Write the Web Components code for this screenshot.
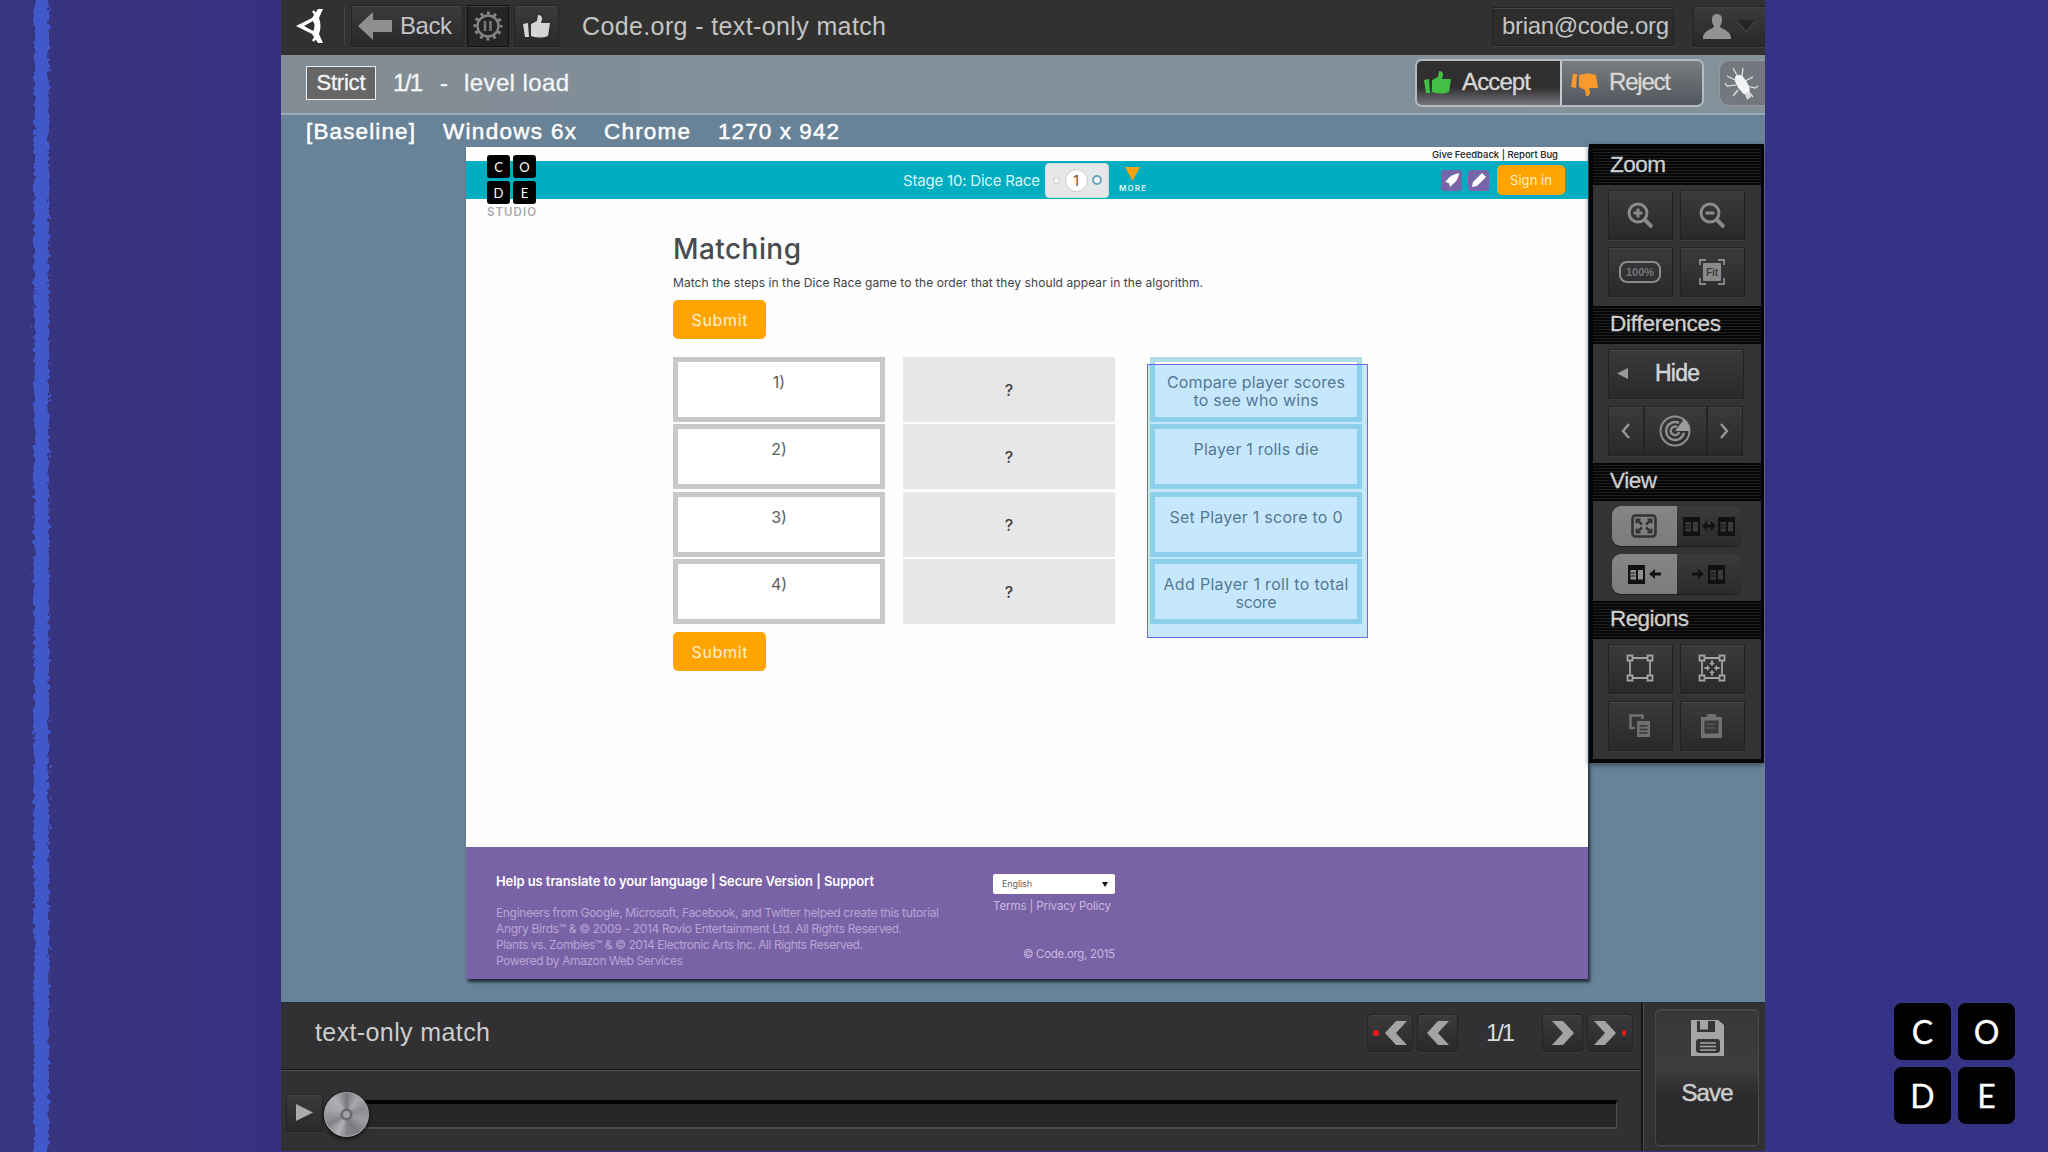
<!DOCTYPE html>
<html lang="en">
<head>
<meta charset="utf-8">
<title>Code.org - text-only match</title>
<style>
  body {
    margin: 0;
    width: 2048px;
    height: 1152px;
    overflow: hidden;
    background: #353285;
    font-family: "Liberation Sans", Arial, sans-serif;
  }
</style>
</head>
<body>
<video-frame></video-frame>
<script>
const ICONS = {
  eye: ['0 0 28 36', '<path d="M22 1 16 10 0 18l16 8 6 9h5l-4-9q3-8 0-16l4-9zM17 13q3 5 0 10L8 18z" fill="#fff" fill-rule="evenodd"/><path d="m17 3 5 7M17 33l5-7" stroke="#fff" stroke-width="2.5"/>'],
  back: ['0 0 34 28', '<path d="M0 14 15 0v8h19v12H15v8z" fill="#8f8f8f"/>'],
  gear: ['0 0 30 30', '<circle cx="15" cy="15" r="10.5" fill="none" stroke="#858585" stroke-width="2.4"/><circle cx="15" cy="15" r="13" fill="none" stroke="#858585" stroke-width="3" stroke-dasharray="3 3.807" stroke-dashoffset="1.5"/><path d="M12 10v10M17.500 10v10" stroke="#777" stroke-width="2.600"/>'],
  thumb: ['0 0 27 23', '<path d="m0 9 5-1 1 14H2zM8 9l6-3 1-6q4 0 4 4l-1 4h9l-2 13q-8 3-17 0z" fill="currentColor"/>'],
  user: ['0 0 28 25', '<path d="M14 0c4 0 5.500 3 5 6.500 0 3-1.500 4-2 6 1 3 11 3 11 12.500H0c0-9.500 10-9.500 11-12.500-.500-2-2-3-2-6C8.500 3 10 0 14 0z" fill="#929292"/>'],
  caret: ['0 0 18 12', '<path d="M0 0h18l-9 12z" fill="#242625"/><path d="m0 1 9 11 9-11" fill="none" stroke="#4c4e4c"/>'],
  bug: ['0 0 40 40', '<g stroke="#e4e6e8" stroke-width="1.200" fill="none"><path d="m17 14-5-9M21 14l1-9M14 17l-8-4M15 22l-9 1-2-3M17 27l-5 6M24 18l8-4M26 23l8 2 3-2M27 28l5 6"/></g><path d="M14 14q5-5 9 1 8 10 5 16-5 2-8-3-7-7-6-14z" fill="#f2f3f4"/><path d="m24 31 2 6 4-3-2-6z" fill="#d8dadc"/>'],
  zoomIn: ['0 0 26 26', '<circle cx="11" cy="11" r="9" fill="none" stroke="#8b8b8d" stroke-width="3"/><path d="M6.500 11h9M11 6.500v9" stroke="#8b8b8d" stroke-width="3"/><path d="m17 17 8 8" stroke="#8b8b8d" stroke-width="4"/>'],
  zoomOut: ['0 0 26 26', '<circle cx="11" cy="11" r="9" fill="none" stroke="#8b8b8d" stroke-width="3"/><path d="M6.500 11h9" stroke="#8b8b8d" stroke-width="3"/><path d="m17 17 8 8" stroke="#8b8b8d" stroke-width="4"/>'],
  full: ['0 0 42 22', '<rect x="1" y="1" width="40" height="20" rx="7" fill="none" stroke="#8b8b8d" stroke-width="2"/><text x="21" y="14.500" text-anchor="middle" font-family="Liberation Sans" font-weight="bold" font-size="11" fill="#77777a" textLength="28">100%</text>'],
  fit: ['0 0 26 26', '<path d="M1 6V1h6M19 1h6v5M25 19v6h-6M7 25H1v-6" fill="none" stroke="#8b8b8d" stroke-width="1.800"/><rect x="4" y="4" width="18" height="18" rx="1" fill="#8b8b8d"/><text x="13" y="17" text-anchor="middle" font-family="Liberation Sans" font-weight="bold" font-size="10" fill="#3c3c3e">Fit</text>'],
  left: ['0 0 9 16', '<path d="M8 1 2 8l6 7" fill="none" stroke="#98989a" stroke-width="2.400"/>'],
  right: ['0 0 9 16', '<path d="m1 1 6 7-6 7" fill="none" stroke="#98989a" stroke-width="2.400"/>'],
  tri: ['0 0 11 11', '<path d="M0 5.500 11 0v11z" fill="#98989a"/>'],
  radar: ['0 0 32 32', '<g fill="none" stroke="#8f8f91"><circle cx="16" cy="16" r="14.500" stroke-width="2"/><path d="M20 7.900a9 9 0 1 0 4.900 9.800" stroke-width="2.400"/><path d="M18 12a4.300 4.300 0 1 0 2.200 5" stroke-width="2.400"/></g><path d="m16 16 9-12q5 5 5.500 12z" fill="#9b9b9d"/>'],
  collapse: ['0 0 26 24', '<rect x="1.500" y="1.500" width="23" height="21" rx="3" fill="none" stroke="#333" stroke-width="2.600"/><path d="m6 6 5 4.500M20 6l-5 4.500M6 18l5-4.500M20 18l-5-4.500" stroke="#333" stroke-width="2.400"/><path d="M5.500 9.500v-4h4M16.500 5.500h4v4M20.500 14.500v4h-4M9.500 18.500h-4v-4" fill="none" stroke="#333" stroke-width="2"/>'],
  film: ['0 0 17 19', '<path d="M0 0h17v19H0z" fill="#111"/><path d="M2.500 5H8v9.500H2.500zM10 5h5v9.500h-5z" fill="currentColor"/><path d="M3 8h4.500M3 11h4.500" stroke="#111"/>'],
  both: ['0 0 14 12', '<path d="M0 6l5-5v3.500h4V1l5 5-5 5V7.500H5V11z" fill="#111"/>'],
  toLeft: ['0 0 12 10', '<path d="m0 5 6-5v3.500h6v3H6V10z" fill="#111"/>'],
  toRight: ['0 0 12 10', '<path d="M12 5 6 0v3.500H0v3h6V10z" fill="#111"/>'],
  region: ['0 0 28 28', '<g fill="none" stroke="#a2a2a4" stroke-width="1.800"><path d="M7 4h14M7 24h14M4 7v14M24 7v14"/><path d="M1.500 1.500h5v5h-5zM21.500 1.500h5v5h-5zM1.500 21.500h5v5h-5zM21.500 21.500h5v5h-5z"/></g>'],
  regionAll: ['0 0 28 28', '<g fill="none" stroke="#a2a2a4" stroke-width="1.800"><path d="M7 4h14M7 24h14M4 7v14M24 7v14"/><path d="M1.500 1.500h5v5h-5zM21.500 1.500h5v5h-5zM1.500 21.500h5v5h-5zM21.500 21.500h5v5h-5z"/></g><path d="M14 12l-3-3h2V6.500h2V9h2zM14 16l-3 3h2v2.500h2V19h2zM12 14l-3-3v2H6.500v2H9v2zM16 14l3-3v2h2.500v2H19v2z" fill="#a2a2a4"/>'],
  copy: ['0 0 22 24', '<path d="M6 14H1.500V1.500h12V5" fill="none" stroke="#707072" stroke-width="2.400"/><path d="M8 7h13v16H8z" fill="#707072"/><path d="M10.500 12h8M10.500 15.500h8M10.500 19h8" stroke="#333" stroke-width="1.500"/>'],
  paste: ['0 0 21 24', '<path d="M0 3h5l2-3h7l2 3h5v21H0z" fill="#707072"/><path d="M3.500 6.500h14v13h-14z" fill="#39393b"/><path d="M5.500 10h9M5.500 14h9" stroke="#59595b" stroke-width="1.300"/>'],
  prev: ['0 0 22 24', '<path d="M11 0h11L11 12l11 12H11L0 12z" fill="#a3a3a3"/>'],
  next: ['0 0 22 24', '<path d="M0 0h11l11 12-11 12H0l11-12z" fill="#a3a3a3"/>'],
  play: ['0 0 17 17', '<path d="M0 0v17l17-8.500z" fill="#ababad"/>'],
  disk: ['0 0 33 36', '<path d="M0 0h27l6 5v31H0z" fill="#a5a5a5"/><path d="M6 1h18v11H6z" fill="#353537"/><path d="M9 1h8v8.500H9z" fill="#a5a5a5"/><rect x="5" y="19" width="24" height="14" rx="3" fill="#353537"/><path d="M9 23h16M9 26.500h16M9 30h16" stroke="#a5a5a5" stroke-width="1.600"/>'],
  rocket: ['0 0 16 16', '<path d="M15 1Q6 3 4 7L1 10l4 1 1 4 3-3q5-3 6-11z" fill="#fff"/>'],
  pencil: ['0 0 16 16', '<path d="m1 15 1-5 9-9 4 4-9 9z" fill="#fff"/>']
};

const define = (name, markup) => customElements.define(name, class extends HTMLElement {
  constructor() {
    super();
    this.attachShadow({ mode: "open" }).innerHTML = markup;
  }
});

class UiIcon extends HTMLElement {
  connectedCallback() {
    const [box, body] = ICONS[this.getAttribute("name")];
    const [, , w, h] = box.split(" ");
    this.attachShadow({ mode: "open" }).innerHTML = `
      <style>:host { display: block; flex: none; width: ${w}px; height: ${h}px; } svg { display: block; width: 100%; height: 100%; }</style>
      <svg viewBox="${box}">${body}</svg>`;
  }
}
customElements.define("ui-icon", UiIcon);

// one line of text spread over a given width
class FitText extends HTMLElement {
  connectedCallback() {
    const width = Number(this.getAttribute("w"));
    this.attachShadow({ mode: "open" }).innerHTML = `
      <style>:host { display: block; flex: none; white-space: nowrap; text-align: left; width: ${width}px; } span { display: inline-block; vertical-align: top; }</style>
      <span><slot></slot></span>`;
    const span = this.shadowRoot.querySelector("span");
    const natural = span.getBoundingClientRect().width;
    span.style.letterSpacing = (width - natural) / (this.textContent.length - 1) + "px";
  }
}

define("dark-button", `
  <style>
    :host {
      display: flex; align-items: center; justify-content: center; flex: none;
      box-sizing: border-box; border: 1px solid #222324;
      background: linear-gradient(#3b3b3d, #29292b);
      box-shadow: inset 0 1px #444446, 0 1px #3d3d3f;
    }
  </style>
  <slot></slot>`);

define("top-bar", `
  <style>
    :host { display: flex; height: 55px; box-sizing: border-box; padding: 0 0 3px 15px; align-items: center; background: #313230; color: #c4c4c4; font-size: 24px; overflow: hidden; }
    .sep { width: 1px; height: 38px; margin: 0 6px 0 20px; background: #444543; }
    .back { width: 112px; height: 42px; gap: 8px; padding-right: 4px; }
    .gear { width: 42px; height: 42px; margin-left: 4px; background: #242524; border-color: #111; }
    .like { width: 45px; height: 42px; margin-left: 5px; color: #d5d5d5; }
    .title { margin-left: 23px; font-size: 25px; }
    .mail { width: 182px; height: 39px; margin-left: auto; padding-left: 5px; background: #2c2d2c; }
    .user { width: 90px; height: 41px; margin: 0 -18px 0 19px; justify-content: flex-start; padding-left: 9px; gap: 6px; }
  </style>
  <ui-icon name="eye"></ui-icon>
  <div class="sep"></div>
  <dark-button class="back"><ui-icon name="back"></ui-icon><fit-text w="52">Back</fit-text></dark-button>
  <dark-button class="gear"><ui-icon name="gear"></ui-icon></dark-button>
  <dark-button class="like"><ui-icon name="thumb"></ui-icon></dark-button>
  <fit-text class="title" w="304">Code.org - text-only match</fit-text>
  <dark-button class="mail"><fit-text w="167">brian@code.org</fit-text></dark-button>
  <dark-button class="user"><ui-icon name="user"></ui-icon><ui-icon name="caret"></ui-icon></dark-button>`);

define("step-bar", `
  <style>
    :host { display: flex; height: 60px; box-sizing: border-box; padding: 0 0 3px 25px; align-items: center; background: linear-gradient(90deg, #828d96, #83919b); border-bottom: 2px solid #96a9b7; color: #f4f6f8; font-size: 24px; overflow: hidden; -webkit-text-stroke: .3px; }
    .strict { box-sizing: border-box; width: 70px; height: 34px; border: 1.500px solid #eee; background: #666; display: flex; justify-content: center; align-items: center; font-size: 22px; margin-right: 17px; }
    .dash { margin: 0 16px 0 17px; }
    .verdict { display: flex; box-sizing: border-box; width: 289px; height: 48px; margin-left: auto; border: 2px solid #b4bbc1; border-radius: 7px; overflow: hidden; color: #d8d8d8; }
    .verdict div { display: flex; box-sizing: border-box; align-items: center; padding-bottom: 1px; }
    .accept { width: 145px; background: linear-gradient(#302e2e 60%, #75757b); padding-left: 7px; gap: 11px; border-right: 2px solid #c6cace; }
    .accept ui-icon { color: #42c046; }
    .reject { flex: 1; background: linear-gradient(#7b7d7e, #50575f); padding-left: 9px; gap: 11px; }
    .reject ui-icon { color: #fb9a2c; transform: scaleY(-1) translateY(-2px); }
    .bug { flex: none; width: 46px; height: 46px; margin: 0 0 0 15px; border-radius: 10px 0 0 10px; border: 1px solid #96999e; border-right: 0; background: #74777d; box-sizing: border-box; padding: 2px 0 0 1px; overflow: hidden; }
  </style>
  <div class="strict"><fit-text w="49">Strict</fit-text></div>
  <fit-text w="30">1/1</fit-text><span class="dash">-</span><fit-text w="105">level load</fit-text>
  <div class="verdict">
    <div class="accept"><ui-icon name="thumb"></ui-icon><fit-text w="69">Accept</fit-text></div>
    <div class="reject"><ui-icon name="thumb"></ui-icon><fit-text w="62">Reject</fit-text></div>
  </div>
  <div class="bug"><ui-icon name="bug"></ui-icon></div>`);

define("code-logo", `
  <style>
    :host { display: grid; grid-template-columns: auto auto; width: max-content; gap: var(--gap, 7px); font: 400 var(--letter, 32px) Lato, sans-serif; color: #fff; }
    div { display: flex; align-items: center; justify-content: center; width: var(--cell, 57px); height: var(--cell, 57px); border-radius: var(--round, 8px); background: #000; -webkit-text-stroke: var(--stroke, .3px) #fff; }
  </style>
  <div>C</div><div>O</div><div>D</div><div>E</div>`);

define("orange-button", `
  <style>
    :host { display: flex; align-items: center; justify-content: center; width: 93px; height: 39px; border-radius: 5px; background: #ffa400; color: #fff0ce; font-size: 16px; }
  </style>
  <slot></slot>`);

define("match-card", `
  <style>
    :host { display: block; box-sizing: border-box; height: 65px; border: 5px solid #c8c8c9; padding: 11px 0 0; background: #fff; font-size: 16px; line-height: 18px; color: #5b5d61; text-align: center; }
    :host([kind=slot]) { border: 0; padding: 24px 0 0; background: #e7e7e8; color: #444; font-weight: 500; }
    :host([kind=answer]) { border-color: #addce4; }
    ::slotted(*) { margin: 0 auto; }
  </style>
  <slot></slot>`);

define("studio-header", `
  <style>
    :host { display: block; position: relative; }
    .links { height: 13px; padding-top: 1px; display: flex; align-items: center; justify-content: flex-end; padding-right: 30px; font-size: 9.500px; color: #222; font-weight: 500; }
    .bar { height: 38px; display: flex; align-items: center; background: #00adc1; padding-left: 437px; color: #d9f6f8; font-size: 15px; }
    .stage { display: flex; align-items: center; justify-content: space-between; box-sizing: border-box; width: 64px; height: 35px; margin-left: 5px; padding: 0 6px 0 7px; border-radius: 4px; background: #e5e7e9; border: 1px solid #cfdcde; }
    .stage i { width: 5px; height: 5px; border-radius: 50%; border: 1.500px solid #c9c9cb; background: #f6f6f6; }
    .stage b { width: 21px; height: 21px; line-height: 21px; border-radius: 50%; background: #fff; border: 1px solid #c8c8c8; text-align: center; color: #555; font-weight: 400; font-size: 14px; }
    .stage i:last-child { width: 6px; height: 6px; border: 2px solid #68a4bd; }
    .more { display: grid; justify-items: center; gap: 4px; margin: 0 0 2px 10px; font-size: 8px; line-height: 7px; font-weight: 600; }
    .more svg { display: block; }
    .tool { display: flex; align-items: center; justify-content: center; width: 21px; height: 21px; border-radius: 3px; background: #7665a8; margin-right: 6px; }
    .gap { margin-left: auto; }
    orange-button { width: 68px; height: 30px; margin: 0 23px 0 2px; font-size: 13px; }
    .logo { position: absolute; left: 21px; top: 8px; --cell: 23px; --gap: 3px; --round: 3px; --letter: 13px; --stroke: 0; }
    .logo code-logo { margin-bottom: 3px; }
    .logo fit-text { font-size: 11.500px; line-height: 11px; font-weight: 600; color: #a9a9ab; }
  </style>
  <div class="links"><fit-text w="126">Give Feedback | Report Bug</fit-text></div>
  <div class="bar">
    <fit-text w="137">Stage 10: Dice Race</fit-text>
    <div class="stage"><i></i><b>1</b><i></i></div>
    <div class="more"><svg width="15" height="14"><path d="M0 0h15L7.500 14z" fill="#f5a60c"/></svg><fit-text w="27">MORE</fit-text></div>
    <span class="gap"></span>
    <span class="tool"><ui-icon name="rocket"></ui-icon></span>
    <span class="tool"><ui-icon name="pencil"></ui-icon></span>
    <orange-button><fit-text w="42">Sign in</fit-text></orange-button>
  </div>
  <div class="logo"><code-logo></code-logo><fit-text w="49">STUDIO</fit-text></div>`);

define("matching-level", `
  <style>
    :host { display: block; position: relative; height: 648px; box-sizing: border-box; padding: 30px 0 0 207px; }
    h1 { margin: 0; font-size: 28px; line-height: 40px; font-weight: 500; color: #4a4b4f; }
    .hint { margin: 4px 0 7px; font-size: 12px; line-height: 20px; color: #414246; }
    .board { display: grid; grid-template-columns: 212px 212px 212px; column-gap: 18px; row-gap: 2.400px; margin: 18px 0 8px; }
    match-card[kind=answer] { margin: 0 -17px 0 17px; }
    /* difference region laid over the answers */
    .diff { position: absolute; left: 681px; top: 165px; width: 221px; height: 274px; box-sizing: border-box; border: 1.500px solid #6c68ee; background: rgba(70, 182, 255, .31); }
  </style>
  <h1><fit-text w="128">Matching</fit-text></h1>
  <fit-text class="hint" w="530">Match the steps in the Dice Race game to the order that they should appear in the algorithm.</fit-text>
  <orange-button><fit-text w="56">Submit</fit-text></orange-button>
  <div class="board">
    <match-card>1)</match-card><match-card kind="slot">?</match-card>
    <match-card kind="answer"><fit-text w="178">Compare player scores</fit-text><fit-text w="125">to see who wins</fit-text></match-card>
    <match-card>2)</match-card><match-card kind="slot">?</match-card>
    <match-card kind="answer"><fit-text w="125">Player 1 rolls die</fit-text></match-card>
    <match-card>3)</match-card><match-card kind="slot">?</match-card>
    <match-card kind="answer"><fit-text w="173">Set Player 1 score to 0</fit-text></match-card>
    <match-card>4)</match-card><match-card kind="slot">?</match-card>
    <match-card kind="answer"><fit-text w="185">Add Player 1 roll to total</fit-text><fit-text w="41">score</fit-text></match-card>
  </div>
  <orange-button><fit-text w="56">Submit</fit-text></orange-button>
  <div class="diff"></div>`);

define("studio-footer", `
  <style>
    :host { display: flex; height: 132px; box-sizing: border-box; padding: 26px 0 0 30px; background: #7962a6; color: #baa5d4; font-size: 12px; line-height: 16px; }
    .links { display: flex; font-size: 13px; font-weight: 600; color: #fff; margin-bottom: 16px; }
    .left { width: 497px; }
    .right { width: 122px; font-size: 11.500px; color: #c9b8de; }
    .select { display: flex; align-items: center; justify-content: space-between; box-sizing: border-box; height: 20px; margin: 1px 0 4px; padding: 0 7px 0 9px; border-radius: 2px; background: #fff; color: #666; font-size: 9px; }
    .select i { border: 3px solid transparent; border-top: 5px solid #111; border-bottom: 0; }
    .copy { margin: 32px 0 0 auto; }
  </style>
  <div class="left">
    <div class="links"><fit-text w="378">Help us translate to your language | Secure Version | Support</fit-text></div>
    <fit-text w="443">Engineers from Google, Microsoft, Facebook, and Twitter helped create this tutorial</fit-text>
    <fit-text w="406">Angry Birds™ &amp; © 2009 - 2014 Rovio Entertainment Ltd. All Rights Reserved.</fit-text>
    <fit-text w="367">Plants vs. Zombies™ &amp; © 2014 Electronic Arts Inc. All Rights Reserved.</fit-text>
    <fit-text w="187">Powered by Amazon Web Services</fit-text>
  </div>
  <div class="right">
    <div class="select"><fit-text w="30">English</fit-text><i></i></div>
    <fit-text w="118">Terms | Privacy Policy</fit-text>
    <fit-text class="copy" w="92">© Code.org, 2015</fit-text>
  </div>`);

define("screen-capture", `
  <style>
    :host { display: block; width: 1122px; height: 832px; background: #fefefe; font-family: Inter, sans-serif; box-shadow: 2px 3px 3px #1c2a35; }
  </style>
  <studio-header></studio-header>
  <matching-level></matching-level>
  <studio-footer></studio-footer>`);

define("panel-section", `
  <style>
    :host { display: block; }
    header { height: 38px; box-sizing: border-box; padding: 2px 0 0 17px; line-height: 32px; font-size: 22.500px; color: #cfcfcf; background: repeating-linear-gradient(#060607 0 2px, #1e1f20 2px 3px); -webkit-text-stroke: .3px #cfcfcf; }
    .body { display: grid; gap: 7px; padding: 5px 15px 9px; }
  </style>
  <header><slot name="title"></slot></header>
  <div class="body"><slot></slot></div>`);

define("view-toggle", `
  <style>
    :host { display: flex; width: 129px; height: 40px; margin-left: 4px; border-radius: 9px; overflow: hidden; background: linear-gradient(#3b3b3d, #2a2a2c); box-shadow: 0 1px 1px #1f1f20; }
    div { display: flex; align-items: center; justify-content: center; gap: 4px; flex: 1; color: #3a3a3c; }
    div:first-of-type { background: linear-gradient(#858587, #7c7c7e); color: #909092; }
  </style>
  <div><slot name="on"></slot></div><div><slot name="off"></slot></div>`);

define("tool-panel", `
  <style>
    :host { display: block; box-sizing: border-box; width: 175px; height: 619px; border: 4px solid #050506; border-top-width: 3px; border-right-width: 3px; background: #333335; box-shadow: 0 2px 5px #3a4c5a; }
    .row { display: flex; gap: 7px; }
    .row dark-button { width: 65px; height: 50px; padding: 0 2px 1px 0; }
    .regions dark-button { padding-bottom: 3px; }
    .hide dark-button { width: 136px; justify-content: flex-start; padding-left: 8px; gap: 27px; color: #d2d2d2; font-size: 23px; -webkit-text-stroke: .5px #d2d2d2; }
    .step { gap: 0; }
    .step dark-button { width: 36px; }
    .step .mid { width: 63px; }
    .view { gap: 8px; display: grid; margin-bottom: -1px; }
    .film { gap: 2px; display: flex; align-items: center; }
  </style>
  <panel-section>
    <fit-text slot="title" w="56">Zoom</fit-text>
    <div class="row"><dark-button><ui-icon name="zoomIn"></ui-icon></dark-button><dark-button><ui-icon name="zoomOut"></ui-icon></dark-button></div>
    <div class="row"><dark-button><ui-icon name="full"></ui-icon></dark-button><dark-button><ui-icon name="fit"></ui-icon></dark-button></div>
  </panel-section>
  <panel-section>
    <fit-text slot="title" w="111">Differences</fit-text>
    <div class="row hide"><dark-button><ui-icon name="tri"></ui-icon><fit-text w="45">Hide</fit-text></dark-button></div>
    <div class="row step"><dark-button><ui-icon name="left"></ui-icon></dark-button><dark-button class="mid"><ui-icon name="radar"></ui-icon></dark-button><dark-button><ui-icon name="right"></ui-icon></dark-button></div>
  </panel-section>
  <panel-section style="margin-top: -2px">
    <fit-text slot="title" w="47">View</fit-text>
    <div class="view">
      <view-toggle>
        <ui-icon slot="on" name="collapse"></ui-icon>
        <span slot="off" class="film"><ui-icon name="film"></ui-icon><ui-icon name="both"></ui-icon><ui-icon name="film"></ui-icon></span>
      </view-toggle>
      <view-toggle>
        <ui-icon slot="on" name="film"></ui-icon><ui-icon slot="on" name="toLeft"></ui-icon>
        <ui-icon slot="off" name="toRight"></ui-icon><ui-icon slot="off" name="film"></ui-icon>
      </view-toggle>
    </div>
  </panel-section>
  <panel-section style="margin-top: -1px">
    <fit-text slot="title" w="79">Regions</fit-text>
    <div class="row regions"><dark-button><ui-icon name="region"></ui-icon></dark-button><dark-button><ui-icon name="regionAll"></ui-icon></dark-button></div>
    <div class="row"><dark-button><ui-icon name="copy"></ui-icon></dark-button><dark-button><ui-icon name="paste"></ui-icon></dark-button></div>
  </panel-section>`);

define("compare-area", `
  <style>
    :host { display: grid; grid-template-rows: 32px 1fr; height: 887px; background: #688297; overflow: hidden; }
    .env { display: flex; align-items: center; padding: 1px 0 0 25px; font-size: 22.500px; color: #fff; -webkit-text-stroke: .5px #fff; }
    .env fit-text { margin-right: 28px; }
    .main { display: flex; padding-left: 185px; }
    tool-panel { margin: -3px 0 0 1px; }
  </style>
  <div class="env"><fit-text w="109">[Baseline]</fit-text><fit-text w="133">Windows 6x</fit-text><fit-text w="86">Chrome</fit-text><fit-text w="121">1270 x 942</fit-text></div>
  <div class="main"><screen-capture></screen-capture><tool-panel></tool-panel></div>`);

define("play-bar", `
  <style>
    :host { display: flex; height: 149px; box-sizing: border-box; border-top: 1px solid #262b33; background: #313032; color: #cdcdcb; font-size: 24px; }
    .left { width: 1360px; border-right: 2px solid #141415; box-shadow: 1px 0 #4c4c4e; }
    .name { display: flex; align-items: center; height: 67px; box-sizing: border-box; padding: 0 8px 7px 34px; border-bottom: 1px solid #151516; box-shadow: 0 1px #505052; }
    .title { font-size: 25px; }
    .name dark-button { height: 38px; width: 41px; border-radius: 4px; margin-left: 4px; }
    .name .wide { width: 46px; gap: 6px; }
    .name .first { margin-left: auto; }
    .count { margin: 0 27px 0 28px; color: #dcdcdc; }
    .dot { width: 6px; height: 6px; border-radius: 50%; background: #f01616; }
    .seek { display: flex; align-items: center; height: 83px; padding: 4px 0 0 5px; box-sizing: border-box; }
    .seek dark-button { width: 37px; height: 38px; margin-top: -2px; }
    .track { display: flex; align-items: center; box-sizing: border-box; width: 1293px; height: 29px; margin: 1px 0 0 1px; background: linear-gradient(90deg, #313032 23px, #272528 23px); }
    .rail { flex: 1; height: 29px; box-sizing: border-box; border-top: 4px solid #020203; border-bottom: 2px solid #4b4b4d; border-right: 1px solid #4b4b4d; margin-left: -22px; }
    .knob { position: relative; width: 45px; height: 45px; flex: none; border-radius: 50%; box-sizing: border-box; border: 1.500px solid #aaa9ad; background: radial-gradient(circle, #a1a0a4 0 3px, #69686c 4px 5px, transparent 7px), conic-gradient(#77767a, #aaa9ad 35deg, #8c8b90 70deg, #9d9ca1 110deg, #7b7a7f 150deg, #858489 180deg, #b5b4b8 205deg, #838287 240deg, #a3a2a7 285deg, #b0afb3 325deg, #77767a); box-shadow: 0 2px 4px #111; }
    .save { display: flex; flex-direction: column; justify-content: flex-start; width: 104px; height: 137px; margin: 6px 0 0 12px; border: 1.500px solid #49494b; border-radius: 5px; padding-top: 10px; background: linear-gradient(#38383a, #3d3b3e 45%, #2b2a2c 65%, #2b2a2c); }
    .save fit-text { margin: 23px 0 0 1px; font-size: 24px; -webkit-text-stroke: .5px #cdcdcb; }
  </style>
  <div class="left">
    <div class="name">
      <fit-text class="title" w="175">text-only match</fit-text>
      <dark-button class="first wide"><span class="dot"></span><ui-icon name="prev"></ui-icon></dark-button>
      <dark-button><ui-icon name="prev"></ui-icon></dark-button>
      <fit-text class="count" w="29">1/1</fit-text>
      <dark-button style="margin-left: 0"><ui-icon name="next"></ui-icon></dark-button>
      <dark-button class="wide"><ui-icon name="next"></ui-icon><span class="dot" style="width: 4px"></span></dark-button>
    </div>
    <div class="seek">
      <dark-button><ui-icon name="play"></ui-icon></dark-button>
      <div class="track"><div class="knob"></div><div class="rail"></div></div>
    </div>
  </div>
  <dark-button class="save"><ui-icon name="disk"></ui-icon><fit-text w="52">Save</fit-text></dark-button>`);

define("review-app", `
  <style>
    :host { display: block; width: 1484px; height: 1151px; flex: none; overflow: hidden; }
  </style>
  <top-bar></top-bar>
  <step-bar></step-bar>
  <compare-area></compare-area>
  <play-bar></play-bar>`);

define("video-frame", `
  <style>
    :host { display: flex; width: 2048px; height: 1152px; }
    .left { width: 281px; flex: none; background: linear-gradient(90deg, #373680 0 30px, #38337f 60px, #373081); }
    .left svg { display: block; }
    .right { flex: 1; display: flex; align-items: flex-end; padding: 0 0 28px 129px; background: #343385; }
  </style>
  <div class="left">
    <svg width="281" height="1152">
      <filter id="rough" x="-1" width="3" y="0" height="1">
        <feTurbulence type="fractalNoise" baseFrequency=".3 .2" numOctaves="3" seed="4"/>
        <feDisplacementMap in="SourceGraphic" scale="8" xChannelSelector="R" yChannelSelector="G"/>
      </filter>
      <rect x="34" width="15" y="-10" height="1172" fill="#4059c9" filter="url(#rough)"/>
    </svg>
  </div>
  <review-app></review-app>
  <div class="right"><code-logo></code-logo></div>`);

// measured last, once the lines sit in their styled parents
customElements.define("fit-text", FitText);
</script>
</body>
</html>
